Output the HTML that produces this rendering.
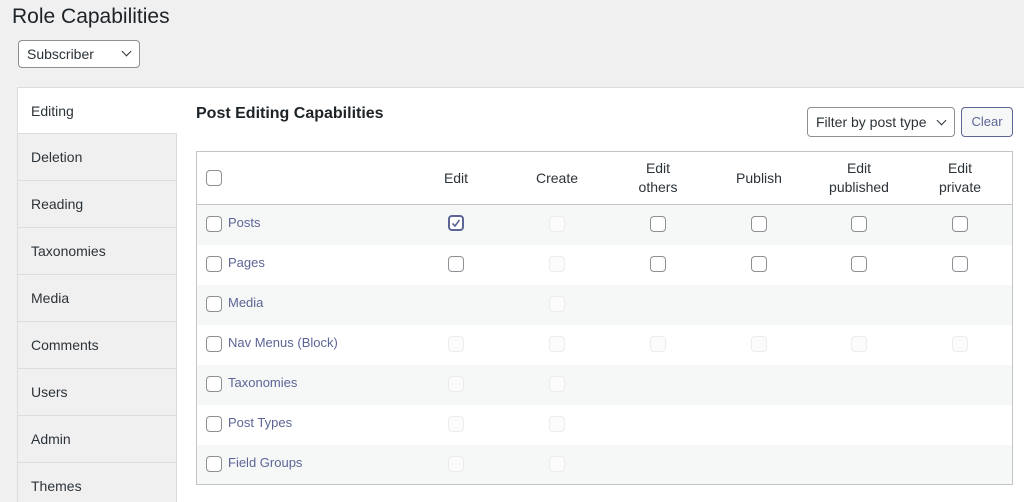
<!DOCTYPE html>
<html style="width:1024px;height:502px;overflow:hidden"><head><style>
*{box-sizing:border-box;margin:0;padding:0}
body{width:1024px;height:502px;overflow:hidden;background:#f0f0f1;font-family:"Liberation Sans",sans-serif;color:#1d2327;position:relative}
.a{position:absolute}
h1{position:absolute;left:12px;top:5px;font-size:21px;font-weight:400;color:#1d2327}
.sel{position:absolute;background:#fff;border:1px solid #8c8f94;border-radius:4px;font-size:14px;color:#2c3338;padding-left:8px;line-height:26px}
.chev{position:absolute;top:9px;width:7px;height:7px;border-right:1.5px solid #2c3338;border-bottom:1.5px solid #2c3338;transform:rotate(45deg)}
.panel{position:absolute;left:17px;top:87px;width:1020px;height:415px;background:#fff;border:1px solid #dcdcde;border-bottom:none}
.tab{position:absolute;left:17px;width:160px;height:47px;background:#f0f0f1;border-left:1px solid #dcdcde;border-right:1px solid #dcdcde;border-bottom:1px solid #dcdcde;font-size:14px;color:#2c3338;padding-left:13px;line-height:46px}
.tab.on{background:#fff;border-right:none}
.tbl{position:absolute;left:196px;top:151px;width:817px;height:334px;border:1px solid #c3c4c7}
.row{position:absolute;left:197px;width:815px;height:40px}
.g{background:#f6f7f7}
.cb{position:absolute;width:16px;height:16px;border:1px solid #8c8f94;border-radius:4px;background:#fff}
.cb.d{border-color:#ececec;background:#fbfbfb}
.lbl{position:absolute;font-size:13px;color:#5d6596}
.th{position:absolute;font-size:14px;color:#2c3338;text-align:center;width:100px;line-height:19px}
</style></head><body>
<h1>Role Capabilities</h1>
<div class="sel" style="left:18px;top:40px;width:122px;height:28px">Subscriber<div class="chev" style="left:104px;top:7px"></div></div>
<div class="panel"></div>
<div class="tab on" style="top:87px;border-top:1px solid #dcdcde">Editing</div>
<div class="tab" style="top:134px">Deletion</div>
<div class="tab" style="top:181px">Reading</div>
<div class="tab" style="top:228px">Taxonomies</div>
<div class="tab" style="top:275px">Media</div>
<div class="tab" style="top:322px">Comments</div>
<div class="tab" style="top:369px">Users</div>
<div class="tab" style="top:416px">Admin</div>
<div class="tab" style="top:463px;height:39px;border-bottom:none">Themes</div>
<div class="a" style="left:196px;top:105px;font-size:16px;font-weight:700;color:#1d2327">Post Editing Capabilities</div>
<div class="sel" style="left:807px;top:107px;width:148px;height:30px;line-height:28px">Filter by post type<div class="chev" style="left:130px;top:9px"></div></div>
<div class="a" style="left:961px;top:107px;width:52px;height:30px;border:1px solid #5d6596;border-radius:4px;background:#f6f7f7;color:#5d6596;font-size:13px;text-align:center;line-height:28px">Clear</div>
<div class="tbl"></div>
<div class="a" style="left:197px;top:204px;width:815px;height:1px;background:#c3c4c7"></div>
<div class="cb" style="left:206px;top:170px"></div>
<div class="th" style="left:406px;top:169px">Edit</div>
<div class="th" style="left:507px;top:169px">Create</div>
<div class="th" style="left:608px;top:159px">Edit<br>others</div>
<div class="th" style="left:709px;top:169px">Publish</div>
<div class="th" style="left:809px;top:159px">Edit<br>published</div>
<div class="th" style="left:910px;top:159px">Edit<br>private</div>

<div class="row g" style="top:205px"></div>
<div class="row g" style="top:285px"></div>
<div class="row g" style="top:365px"></div>
<div class="row g" style="top:445px;height:39px"></div>

<div class="cb" style="left:206px;top:216px"></div><div class="lbl" style="left:228px;top:215px">Posts</div>
<div class="cb" style="left:448px;top:215px;border:2px solid #5d6596"><svg width="12" height="12" style="position:absolute;left:0;top:0" viewBox="0 0 12 12"><path d="M2.5 6.5l2.5 2.5 4.5-6" fill="none" stroke="#5d6596" stroke-width="1.6"/></svg></div>
<div class="cb d" style="left:549px;top:216px"></div>
<div class="cb" style="left:650px;top:216px"></div>
<div class="cb" style="left:751px;top:216px"></div>
<div class="cb" style="left:851px;top:216px"></div>
<div class="cb" style="left:952px;top:216px"></div>

<div class="cb" style="left:206px;top:256px"></div><div class="lbl" style="left:228px;top:255px">Pages</div>
<div class="cb" style="left:448px;top:256px"></div>
<div class="cb d" style="left:549px;top:256px"></div>
<div class="cb" style="left:650px;top:256px"></div>
<div class="cb" style="left:751px;top:256px"></div>
<div class="cb" style="left:851px;top:256px"></div>
<div class="cb" style="left:952px;top:256px"></div>

<div class="cb" style="left:206px;top:296px"></div><div class="lbl" style="left:228px;top:295px">Media</div>
<div class="cb d" style="left:549px;top:296px"></div>

<div class="cb" style="left:206px;top:336px"></div><div class="lbl" style="left:228px;top:335px">Nav Menus (Block)</div>
<div class="cb d" style="left:448px;top:336px"></div>
<div class="cb d" style="left:549px;top:336px"></div>
<div class="cb d" style="left:650px;top:336px"></div>
<div class="cb d" style="left:751px;top:336px"></div>
<div class="cb d" style="left:851px;top:336px"></div>
<div class="cb d" style="left:952px;top:336px"></div>

<div class="cb" style="left:206px;top:376px"></div><div class="lbl" style="left:228px;top:375px">Taxonomies</div>
<div class="cb d" style="left:448px;top:376px"></div>
<div class="cb d" style="left:549px;top:376px"></div>

<div class="cb" style="left:206px;top:416px"></div><div class="lbl" style="left:228px;top:415px">Post Types</div>
<div class="cb d" style="left:448px;top:416px"></div>
<div class="cb d" style="left:549px;top:416px"></div>

<div class="cb" style="left:206px;top:456px"></div><div class="lbl" style="left:228px;top:455px">Field Groups</div>
<div class="cb d" style="left:448px;top:456px"></div>
<div class="cb d" style="left:549px;top:456px"></div>
</body></html>
